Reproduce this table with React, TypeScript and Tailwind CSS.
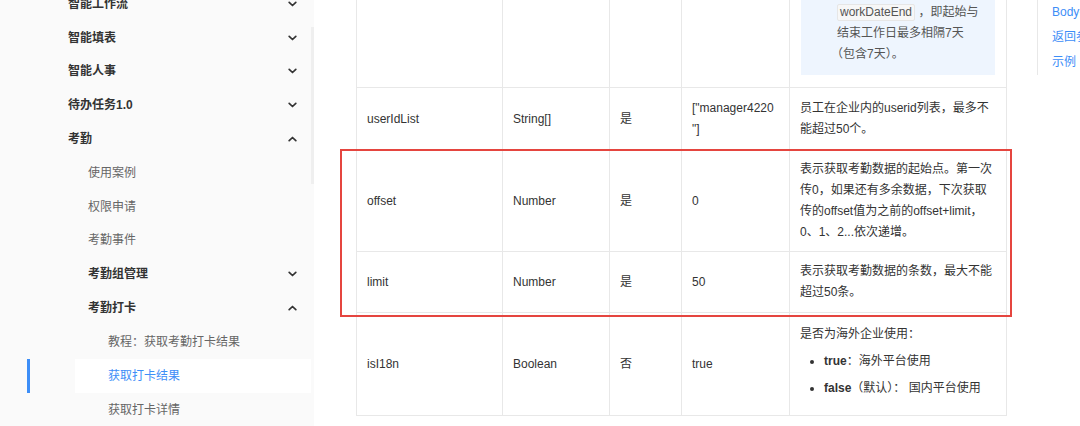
import React from "react";

type NavItem = {
  label: string;
  level: 1 | 2 | 3;
  bold?: boolean;
  chevron?: "down" | "up";
  active?: boolean;
};

const navItems: NavItem[] = [
  { label: "智能工作流", level: 1, bold: true, chevron: "down" },
  { label: "智能填表", level: 1, bold: true, chevron: "down" },
  { label: "智能人事", level: 1, bold: true, chevron: "down" },
  { label: "待办任务1.0", level: 1, bold: true, chevron: "down" },
  { label: "考勤", level: 1, bold: true, chevron: "up" },
  { label: "使用案例", level: 2 },
  { label: "权限申请", level: 2 },
  { label: "考勤事件", level: 2 },
  { label: "考勤组管理", level: 2, bold: true, chevron: "down" },
  { label: "考勤打卡", level: 2, bold: true, chevron: "up" },
  { label: "教程：获取考勤打卡结果", level: 3 },
  { label: "获取打卡结果", level: 3, active: true },
  { label: "获取打卡详情", level: 3 },
];

function Chevron({ dir }: { dir: "down" | "up" }) {
  return (
    <svg width="9" height="6" viewBox="0 0 9 6" className="shrink-0">
      <path
        d={dir === "down" ? "M1.2 1.3l3.3 3.2 3.3-3.2" : "M1.2 4.7l3.3-3.2 3.3 3.2"}
        fill="none"
        stroke="#333"
        strokeWidth="1.7"
        strokeLinecap="round"
        strokeLinejoin="round"
      />
    </svg>
  );
}

function Sidebar() {
  return (
    <aside className="flex h-full w-[314px] shrink-0 bg-[#fafafa]">
      <div className="-mt-[13px] w-[311px]">
        {navItems.map((item) => {
          if (item.active) {
            return (
              <div key={item.label} className="flex h-[34px]">
                <div className="ml-[27px] w-[3px] bg-[#3d8ef7]" />
                <div className="ml-[45px] flex flex-1 items-center bg-white pl-[33px] text-[12px] text-[#3d8ef7]">
                  {item.label}
                </div>
              </div>
            );
          }
          const pad =
            item.level === 1 ? "pl-[68px]" : item.level === 2 ? "pl-[88px]" : "pl-[108px]";
          const tone = item.bold ? "font-semibold text-[#333]" : "text-[#666]";
          return (
            <div
              key={item.label}
              className={`flex h-[33.8px] items-center justify-between pr-[14px] text-[12px] ${pad} ${tone}`}
            >
              <span>{item.label}</span>
              {item.chevron && <Chevron dir={item.chevron} />}
            </div>
          );
        })}
      </div>
      <div className="w-[3px]">
        <div className="mt-[27px] h-[157px] bg-[#efefef]" />
      </div>
    </aside>
  );
}

function Code({ children, wide }: { children: React.ReactNode; wide?: boolean }) {
  return (
    <span
      className={`inline-block h-[17px] rounded-[2px] border border-[#e6e6e6] bg-[#f7f7f7] px-[2px] align-middle leading-[15px] text-[#555] ${
        wide ? "w-[146px]" : ""
      }`}
    >
      {children}
    </span>
  );
}

const cell = "border border-[#e8e8e8] px-[10px] align-middle";

function ParamTable() {
  return (
    <table className="-mt-[148px] w-[650px] table-fixed border-collapse text-[12px] leading-[21px] text-[#333]">
      <colgroup>
        <col className="w-[146px]" />
        <col className="w-[107px]" />
        <col className="w-[72px]" />
        <col className="w-[108px]" />
        <col className="w-[217px]" />
      </colgroup>
      <tbody>
        <tr className="h-[235px]">
          <td className={cell} />
          <td className={cell} />
          <td className={cell} />
          <td className={cell} />
          <td className={`${cell} px-[11px]`}>
            <div className="whitespace-nowrap bg-[#eef5fe] py-[10px] pl-[36px] text-[#555]">
              <div>查询考勤打卡记录的结束</div>
              <div>工作日。</div>
              <div>注意：</div>
              <div>起始与结束工作日需在同</div>
              <div>一个查询周期内，</div>
              <div>
                <Code wide>workDateFrom</Code>
              </div>
              <div>
                <Code>workDateEnd</Code> ，即起始与
              </div>
              <div>结束工作日最多相隔7天</div>
              <div className="-ml-[6px]">（包含7天）。</div>
            </div>
          </td>
        </tr>
        <tr className="h-[63px]">
          <td className={cell}>userIdList</td>
          <td className={cell}>String[]</td>
          <td className={cell}>是</td>
          <td className={`${cell} whitespace-nowrap`}>
            ["manager4220
            <br />
            "]
          </td>
          <td className={`${cell} whitespace-nowrap`}>
            员工在企业内的userid列表，最多不
            <br />
            能超过50个。
          </td>
        </tr>
        <tr className="h-[101px]">
          <td className={cell}>offset</td>
          <td className={cell}>Number</td>
          <td className={cell}>是</td>
          <td className={cell}>0</td>
          <td className={`${cell} whitespace-nowrap`}>
            表示获取考勤数据的起始点。第一次
            <br />
            传0，如果还有多余数据，下次获取
            <br />
            传的offset值为之前的offset+limit，
            <br />
            0、1、2...依次递增。
          </td>
        </tr>
        <tr className="h-[61px]">
          <td className={cell}>limit</td>
          <td className={cell}>Number</td>
          <td className={cell}>是</td>
          <td className={cell}>50</td>
          <td className={`${cell} whitespace-nowrap`}>
            表示获取考勤数据的条数，最大不能
            <br />
            超过50条。
          </td>
        </tr>
        <tr className="h-[103px]">
          <td className={cell}>isI18n</td>
          <td className={cell}>Boolean</td>
          <td className={cell}>否</td>
          <td className={cell}>true</td>
          <td className={`${cell} whitespace-nowrap pb-[5px]`}>
            <div>是否为海外企业使用：</div>
            <ul className="mt-[6px] flex flex-col gap-[6px]">
              <li className="flex items-center">
                <span className="ml-[10px] h-[4px] w-[4px] rounded-full bg-[#333]" />
                <span className="ml-[10px]">
                  <b className="font-bold">true</b>：海外平台使用
                </span>
              </li>
              <li className="flex items-center">
                <span className="ml-[10px] h-[4px] w-[4px] rounded-full bg-[#333]" />
                <span className="ml-[10px]">
                  <b className="font-bold">false</b>（默认）： 国内平台使用
                </span>
              </li>
            </ul>
          </td>
        </tr>
      </tbody>
    </table>
  );
}

function OnThisPage() {
  return (
    <nav className="ml-[30px] shrink-0 border-l border-[#e8e8e8] pl-[14px] text-[12px] leading-[25px] text-[#3d8ef7]">
      <div className="whitespace-nowrap">Body参数</div>
      <div className="whitespace-nowrap">返回参数</div>
      <div className="whitespace-nowrap">示例</div>
    </nav>
  );
}

export default function App() {
  return (
    <div className="relative flex h-[426px] w-[1080px] overflow-hidden bg-white font-['Liberation_Sans','Noto_Sans_CJK_SC',sans-serif]">
      <Sidebar />
      <main className="flex flex-1 items-start pl-[42px]">
        <ParamTable />
        <OnThisPage />
      </main>
      {/* highlight annotation */}
      <div className="pointer-events-none absolute left-[340px] top-[149px] h-[168px] w-[672px] border-2 border-[#e5453f]" />
    </div>
  );
}
